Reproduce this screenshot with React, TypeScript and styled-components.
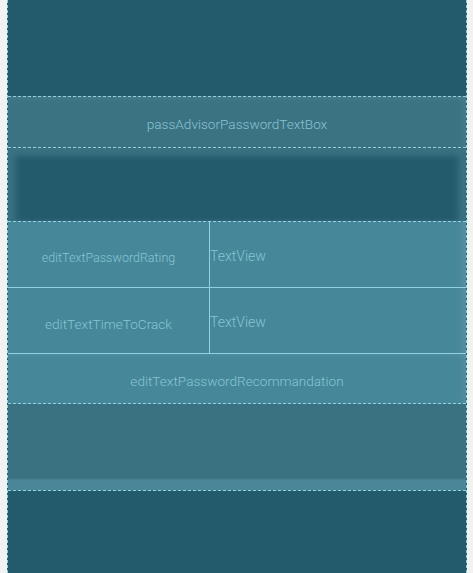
import React from 'react';
import styled, { createGlobalStyle } from 'styled-components';

const GlobalStyle = createGlobalStyle`
  html, body {
    margin: 0;
    padding: 0;
    background: #f1f3f3;
  }
  body {
    font-family: Roboto, "Liberation Sans", Arial, sans-serif;
  }
`;

const guide = '#8fd2e6';

const Screen = styled.div`
  box-sizing: border-box;
  margin-left: 7px;
  width: 460px;
  height: 573px;
  background: #235a6c;
  border-left: 1px dashed ${guide};
  border-right: 1px dashed ${guide};
  display: flex;
  flex-direction: column;
  overflow: hidden;
`;

const Spacer = styled.div<{ $h: number }>`
  height: ${(p) => p.$h}px;
  flex-shrink: 0;
`;

const Band = styled.div<{ $h: number; $bg: string; $top?: boolean }>`
  box-sizing: border-box;
  height: ${(p) => p.$h}px;
  flex-shrink: 0;
  padding-top: 4px;
  background: ${(p) => p.$bg};
  border-top: ${(p) => (p.$top ? `1px dashed ${guide}` : 'none')};
  border-bottom: 1px dashed ${guide};
  display: flex;
  align-items: center;
  justify-content: center;
  box-shadow: inset 0 6px 6px -4px rgba(255, 255, 255, 0.06), inset -8px 0 8px -6px rgba(255, 255, 255, 0.08);
`;

const Label = styled.span<{ $size?: number }>`
  font-size: ${(p) => p.$size ?? 13}px;
  font-weight: 300;
  color: #88c4d4;
  white-space: nowrap;
`;

// dark layout slot with the lighter glow along its edges
const Inset = styled.div`
  box-sizing: border-box;
  height: 73px;
  flex-shrink: 0;
  background: #235a6c;
  box-shadow: inset 0 10px 6px -2px #3a7282, inset 10px 0 6px -2px #3a7282, inset -10px 0 6px -2px #3a7282;
`;

const Table = styled.div`
  flex-shrink: 0;
  background: #47879a;
  display: grid;
  grid-template-columns: 202px 1fr;
  border-top: 1px dashed ${guide};
  box-shadow: inset -8px 0 8px -6px rgba(255, 255, 255, 0.12);
`;

const Cell = styled.div<{ $left?: boolean }>`
  box-sizing: border-box;
  height: 66px;
  border-bottom: 1px solid ${guide};
  border-right: ${(p) => (p.$left ? `1px solid ${guide}` : 'none')};
  display: flex;
  align-items: center;
  justify-content: ${(p) => (p.$left ? 'center' : 'flex-start')};
  padding-top: ${(p) => (p.$left ? 6 : 2)}px;
`;

const Lower = styled.div`
  box-sizing: border-box;
  height: 87px;
  flex-shrink: 0;
  background: linear-gradient(to bottom, #3a7282 0, #3a7282 74px, #4a8698 76px, #4a8698 100%);
  border-bottom: 1px dashed ${guide};
`;

export default function App() {
  return (
    <>
      <GlobalStyle />
      <Screen>
        <Spacer $h={96} />
        <Band $h={52} $bg="#3b7383" $top>
          <Label $size={13.6}>passAdvisorPasswordTextBox</Label>
        </Band>
        <Inset />
        <Table>
          <Cell $left>
            <Label $size={12.5}>editTextPasswordRating</Label>
          </Cell>
          <Cell>
            <Label $size={14}>TextView</Label>
          </Cell>
          <Cell $left>
            <Label $size={13.6}>editTextTimeToCrack</Label>
          </Cell>
          <Cell>
            <Label $size={14}>TextView</Label>
          </Cell>
        </Table>
        <Band $h={50} $bg="#47879a">
          <Label $size={13.6}>editTextPasswordRecommandation</Label>
        </Band>
        <Lower />
      </Screen>
    </>
  );
}
